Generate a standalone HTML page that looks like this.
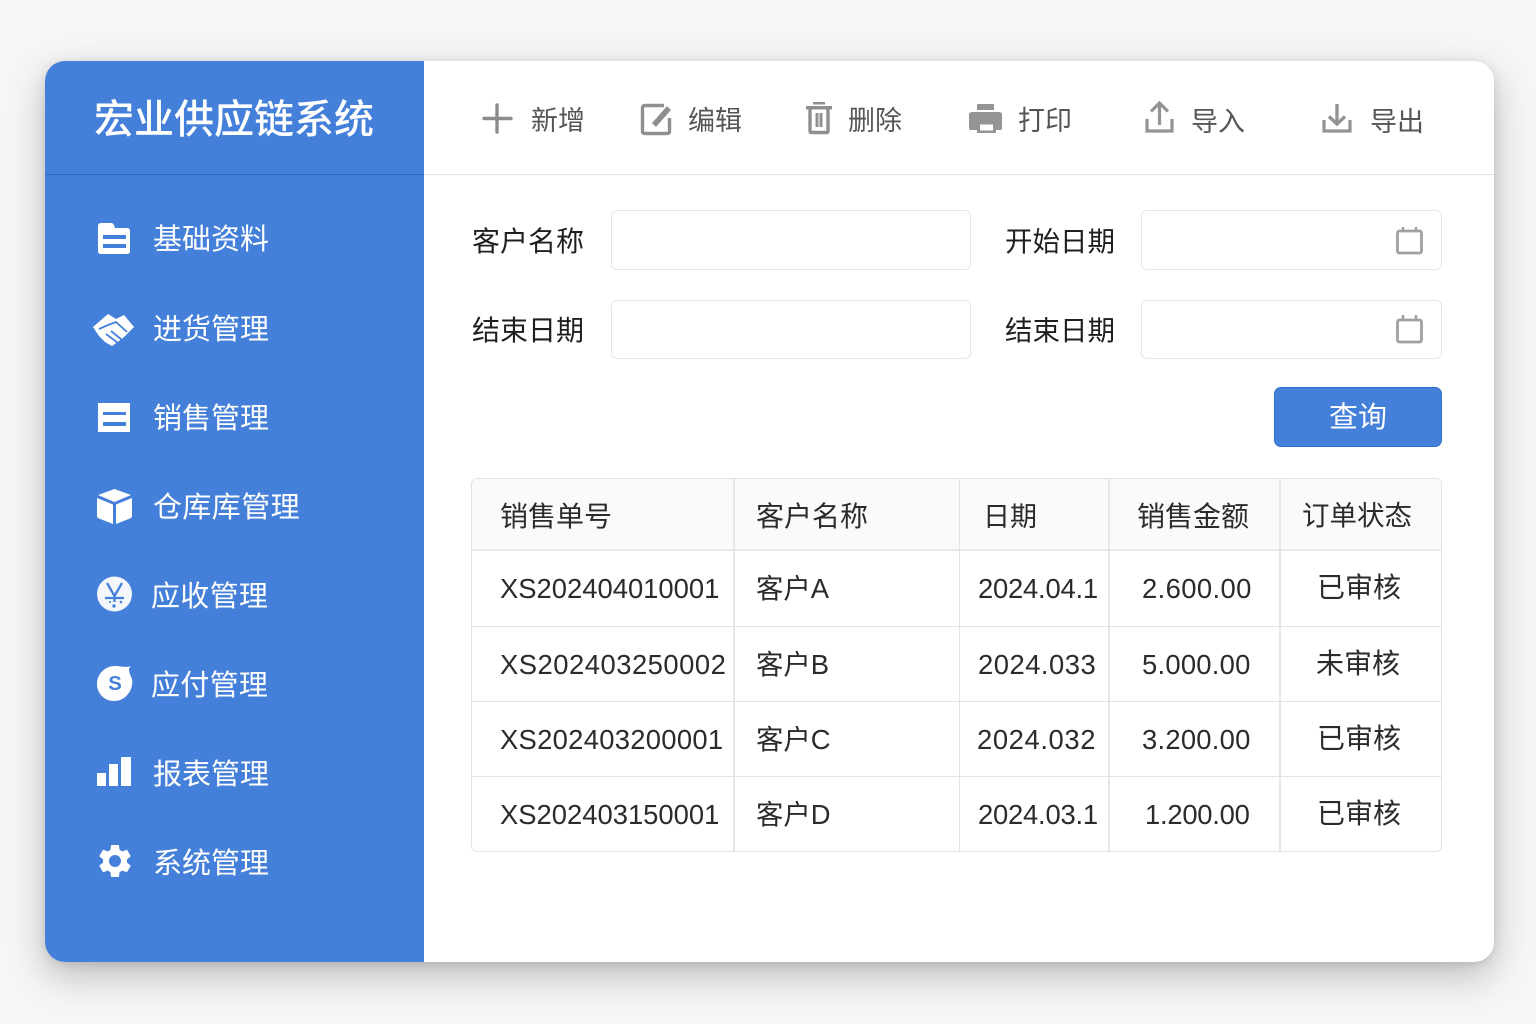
<!DOCTYPE html>
<html lang="zh-CN"><head><meta charset="utf-8"><title>宏业供应链系统</title>
<style>
html,body{margin:0;padding:0;width:1536px;height:1024px;overflow:hidden;background:#f6f6f6;font-family:"Liberation Sans","Noto Sans CJK SC",sans-serif}
#card{position:absolute;left:45px;top:61px;width:1449px;height:901px;border-radius:20px;background:#fff;box-shadow:0 14px 38px rgba(0,0,0,.24),0 2px 10px rgba(0,0,0,.1)}
#side{position:absolute;left:45px;top:61px;width:379px;height:901px;background:#4480da;border-radius:20px 0 0 20px}
.a{position:absolute}
.t{position:absolute;white-space:nowrap;line-height:40px;height:40px}
.n{color:#fff;font-size:29px}
.b{color:#555;font-size:27px}
.l{color:#1f1f1f;font-size:28px}
.h{color:#2b2b2b;font-size:28px}
.d{color:#2b2b2b;font-size:27.4px}
.s{color:#2b2b2b;font-size:28px}
.c{text-align:center}
.in{position:absolute;box-sizing:border-box;background:#fff;border:1.5px solid #e6e6e6;border-radius:6px}
svg{position:absolute;overflow:visible}
</style></head><body>
<div id="card"></div>
<div id="side"></div>
<div class="a" style="left:45px;top:174px;width:379px;height:1px;background:#2f6bc4"></div>
<div class="a" style="left:424px;top:174px;width:1070px;height:1px;background:#e3e3e3"></div>
<div class="t" style="left:94px;top:100px;color:#fff;font-size:40px;font-weight:500">宏业供应链系统</div>

<svg style="left:97px;top:222px" width="34" height="34" viewBox="0 0 34 34"><path fill="#fff" fill-rule="evenodd" d="M4 1h10q2 0 3 2l1 3h12q3 0 3 3v20q0 3-3 3H4q-3 0-3-3V4q0-3 3-3zM6 13v4h23v-4zM6 22v4h23v-4z"/></svg>
<div class="t n" style="left:153px;top:220px">基础资料</div>

<svg style="left:93px;top:314px" width="41" height="32" viewBox="0 0 41 32"><path fill="#fff" d="M0 13 15 0l8 5 8-4 10 12-11 11-11 8-7-4-6-6z"/><path stroke="#4480da" stroke-width="1.800" fill="none" d="M6 15 15 11l8-3 11 10M13 20l12 9M18 17l11 9"/></svg>
<div class="t n" style="left:153px;top:310px">进货管理</div>

<svg style="left:97px;top:402px" width="34" height="32" viewBox="0 0 34 32"><path fill="#fff" fill-rule="evenodd" d="M1 1h32v29H1zM6 10v3h23v-3zM6 20v4h23v-4z"/></svg>
<div class="t n" style="left:153px;top:399px">销售管理</div>

<svg style="left:97px;top:489px" width="35" height="35" viewBox="0 0 35 35"><path fill="#fff" d="M17.500 0 34 6l-16.500 7L1 6zM0 9l16 6.500V35L2 29.500Q0 29 0 27zM35 9l-16 6.500V35l14-5.500q2-.5 2-2.500z"/></svg>
<div class="t n" style="left:153px;top:488px;letter-spacing:.4px">仓库库管理</div>

<svg style="left:97px;top:576px" width="36" height="36" viewBox="0 0 36 36"><circle cx="17.500" cy="18" r="17.500" fill="#f3f6fb"/><path fill="none" stroke="#4480da" stroke-width="2.300" d="M10 7l7.500 13L25 7M17.500 20v6M8 22h19"/><circle cx="17" cy="30" r="1.700" fill="#4480da"/><circle cx="24" cy="26" r="1.300" fill="#4480da"/><circle cx="13" cy="26" r="1" fill="#4480da"/></svg>
<div class="t n" style="left:151px;top:577px;letter-spacing:.3px">应收管理</div>

<svg style="left:97px;top:665px" width="36" height="37" viewBox="0 0 36 37"><path fill="#fff" d="M34 1C30 4 33 9 35 14c2 10-6 22-18 22C7 36 0 28 0 19 0 9 8 1 18 1c6 0 11 2 16 0z"/></svg>
<div class="t" style="left:100px;top:664px;width:30px;text-align:center;color:#4480da;font-size:20px;font-weight:700">S</div>
<div class="t n" style="left:151px;top:666px;letter-spacing:.3px">应付管理</div>

<svg style="left:96px;top:757px" width="36" height="30" viewBox="0 0 36 30"><path fill="#fff" d="M1 16h9v13H1zM13 7h9v22h-9zM25 1q0-1 1-1h9v29H25z"/></svg>
<div class="t n" style="left:153px;top:755px">报表管理</div>

<svg style="left:95px;top:841px" width="40" height="40" viewBox="0 0 24 24"><path fill="#fff" d="M19.140 12.940c.04-.3.060-.61.060-.94 0-.32-.020-.64-.070-.94l2.030-1.580c.18-.14.230-.41.120-.61l-1.920-3.320c-.12-.22-.37-.29-.59-.22l-2.390.96c-.5-.38-1.030-.7-1.620-.94l-.36-2.540c-.04-.24-.24-.41-.48-.41h-3.840c-.24 0-.43.170-.47.410l-.36 2.540c-.59.24-1.130.57-1.620.94l-2.390-.96c-.22-.08-.47 0-.59.220L2.740 8.870c-.12.21-.08.470.12.610l2.030 1.580c-.05.3-.09.630-.09.940s.020.640.070.940l-2.030 1.580c-.18.140-.23.410-.12.610l1.920 3.320c.12.220.37.290.59.220l2.390-.96c.5.380 1.030.7 1.620.94l.36 2.540c.05.240.24.410.48.410h3.840c.24 0 .44-.17.47-.41l.36-2.540c.59-.24 1.130-.56 1.620-.94l2.390.96c.22.080.47 0 .59-.22l1.920-3.320c.12-.22.070-.47-.12-.61l-2.010-1.580zM12 15.600c-1.980 0-3.600-1.620-3.600-3.600s1.620-3.600 3.600-3.600 3.600 1.620 3.600 3.600-1.620 3.600-3.600 3.600z"/></svg>
<div class="t n" style="left:153px;top:844px">系统管理</div>

<svg style="left:482px;top:103px" width="30" height="30" viewBox="0 0 30 30"><path stroke="#8c8c8c" stroke-width="3.400" fill="none" stroke-linecap="round" d="M15 2v27M2 15.500h27"/></svg>
<div class="t b" style="left:531px;top:101px">新增</div>

<svg style="left:640px;top:103px" width="32" height="32" viewBox="0 0 32 32"><path fill="none" stroke="#8f8f8f" stroke-width="3.400" d="M24 2.500H5Q2.500 2.500 2.500 5v23q0 2.500 2.500 2.500h22q2.500 0 2.500-2.500V15"/><path stroke="#8f8f8f" stroke-width="5.500" fill="none" d="M14 22 29 5"/></svg>
<div class="t b" style="left:688px;top:101px">编辑</div>

<svg style="left:805px;top:102px" width="28" height="32" viewBox="0 0 28 32"><path fill="#8f8f8f" d="M8 0h12v2.500H8zM1 4h26v3.500H1z"/><path fill="none" stroke="#8f8f8f" stroke-width="3.400" d="M5 7v22q0 1.500 1.500 1.500h15Q23 30.500 23 29V7"/><path fill="#8f8f8f" d="M10.500 11h3v14h-3zM14.500 11h3v14h-3z"/></svg>
<div class="t b" style="left:848px;top:101px">删除</div>

<svg style="left:968px;top:103px" width="35" height="32" viewBox="0 0 35 32"><path fill="#949494" d="M9 1h17v6H9zM4 9h27q3 0 3 3v13q0 2-2 2H3q-2 0-2-2V12q0-3 3-3z"/><path fill="#fff" d="M9 19h19v11H9z"/><path fill="#949494" d="M9 19h19v11H9zM12 21.500v6h13v-6z" fill-rule="evenodd"/></svg>
<div class="t b" style="left:1018px;top:101px">打印</div>

<svg style="left:1145px;top:101px" width="29" height="32" viewBox="0 0 29 32"><path fill="none" stroke="#949494" stroke-width="3.200" d="M2 18v12h25V18M14.500 24V3M6 10.500 14.500 2 23 10.500"/></svg>
<div class="t b" style="left:1191px;top:102px">导入</div>

<svg style="left:1322px;top:103px" width="30" height="30" viewBox="0 0 30 30"><path fill="none" stroke="#949494" stroke-width="3.200" d="M2 17v11h26V17"/><path fill="none" stroke="#949494" stroke-width="3.400" d="M15 1v20M7 13.500 15 21 23 13.500"/></svg>
<div class="t b" style="left:1370px;top:102px">导出</div>

<div class="t l" style="left:472px;top:222px">客户名称</div>
<div class="in" style="left:611px;top:210px;width:360px;height:60px"></div>
<div class="t l" style="left:1005px;top:222px;font-size:27.500px">开始日期</div>
<div class="in" style="left:1141px;top:210px;width:301px;height:60px"></div>
<svg style="left:1396px;top:226px" width="28" height="29" viewBox="0 0 28 29"><rect x="1.500" y="5" width="24" height="22" rx="2" fill="none" stroke="#a0a0a0" stroke-width="2.800"/><path stroke="#a0a0a0" stroke-width="2.500" d="M7 1v5M20 1v5"/></svg>

<div class="t l" style="left:472px;top:311px">结束日期</div>
<div class="in" style="left:611px;top:300px;width:360px;height:59px"></div>
<div class="t l" style="left:1005px;top:311px;font-size:27.500px">结束日期</div>
<div class="in" style="left:1141px;top:300px;width:301px;height:59px"></div>
<svg style="left:1396px;top:314px" width="28" height="30" viewBox="0 0 28 30"><rect x="1.500" y="6" width="24" height="22" rx="2" fill="none" stroke="#a0a0a0" stroke-width="2.800"/><path stroke="#a0a0a0" stroke-width="2.500" d="M7 1v6M20 1v6"/></svg>

<div class="a" style="left:1274px;top:387px;width:168px;height:60px;box-sizing:border-box;background:#4480da;border:1px solid #2f6fcb;border-radius:7px"></div>
<div class="t c" style="left:1274px;top:398px;width:168px;color:#fff;font-size:29px">查询</div>

<div class="a" style="left:471px;top:478px;width:971px;height:374px;box-sizing:border-box;border:1.500px solid #e3e3e3;border-radius:6px;background:#fff"></div>
<div class="a" style="left:472px;top:479px;width:969px;height:70px;background:#fafafa;border-radius:5px 5px 0 0"></div>
<div class="a" style="left:472px;top:549px;width:969px;height:2px;background:#e8e8e8"></div>
<div class="a" style="left:472px;top:626px;width:969px;height:1px;background:#e2e2e2"></div>
<div class="a" style="left:472px;top:701px;width:969px;height:1px;background:#e2e2e2"></div>
<div class="a" style="left:472px;top:776px;width:969px;height:1px;background:#e2e2e2"></div>
<div class="a" style="left:733px;top:479px;width:1.500px;height:372px;background:#e6e6e6"></div>
<div class="a" style="left:959px;top:479px;width:1px;height:372px;background:#e2e2e2"></div>
<div class="a" style="left:1108px;top:479px;width:1.500px;height:372px;background:#e6e6e6"></div>
<div class="a" style="left:1279px;top:479px;width:1.500px;height:372px;background:#e6e6e6"></div>

<div class="t h" style="left:500px;top:497px">销售单号</div>
<div class="t h" style="left:756px;top:497px">客户名称</div>
<div class="t h" style="left:983px;top:497px;font-size:27px">日期</div>
<div class="t h" style="left:1137px;top:497px">销售金额</div>
<div class="t h" style="left:1302px;top:496px;font-size:27.500px">订单状态</div>

<div class="t d" style="left:500px;top:569px">XS202404010001</div>
<div class="t d" style="left:756px;top:569px">客户A</div>
<div class="t d" style="left:978px;top:569px;letter-spacing:-.22px">2024.04.1</div>
<div class="t d" style="left:1142px;top:569px;letter-spacing:.4px">2.600.00</div>
<div class="t s" style="left:1317px;top:568px">已审核</div>

<div class="t d" style="left:500px;top:645px;letter-spacing:.5px">XS202403250002</div>
<div class="t d" style="left:756px;top:645px">客户B</div>
<div class="t d" style="left:978px;top:645px;letter-spacing:.5px">2024.033</div>
<div class="t d" style="left:1142px;top:645px;letter-spacing:.25px">5.000.00</div>
<div class="t s" style="left:1316px;top:644px">未审核</div>

<div class="t d" style="left:500px;top:720px;letter-spacing:.29px">XS202403200001</div>
<div class="t d" style="left:756px;top:720px">客户C</div>
<div class="t d" style="left:977px;top:720px;letter-spacing:.6px">2024.032</div>
<div class="t d" style="left:1142px;top:720px;letter-spacing:.25px">3.200.00</div>
<div class="t s" style="left:1317px;top:719px">已审核</div>

<div class="t d" style="left:500px;top:795px">XS202403150001</div>
<div class="t d" style="left:756px;top:795px">客户D</div>
<div class="t d" style="left:978px;top:795px;letter-spacing:-.22px">2024.03.1</div>
<div class="t d" style="left:1145px;top:795px;letter-spacing:-.25px">1.200.00</div>
<div class="t s" style="left:1317px;top:794px">已审核</div>
</body></html>
